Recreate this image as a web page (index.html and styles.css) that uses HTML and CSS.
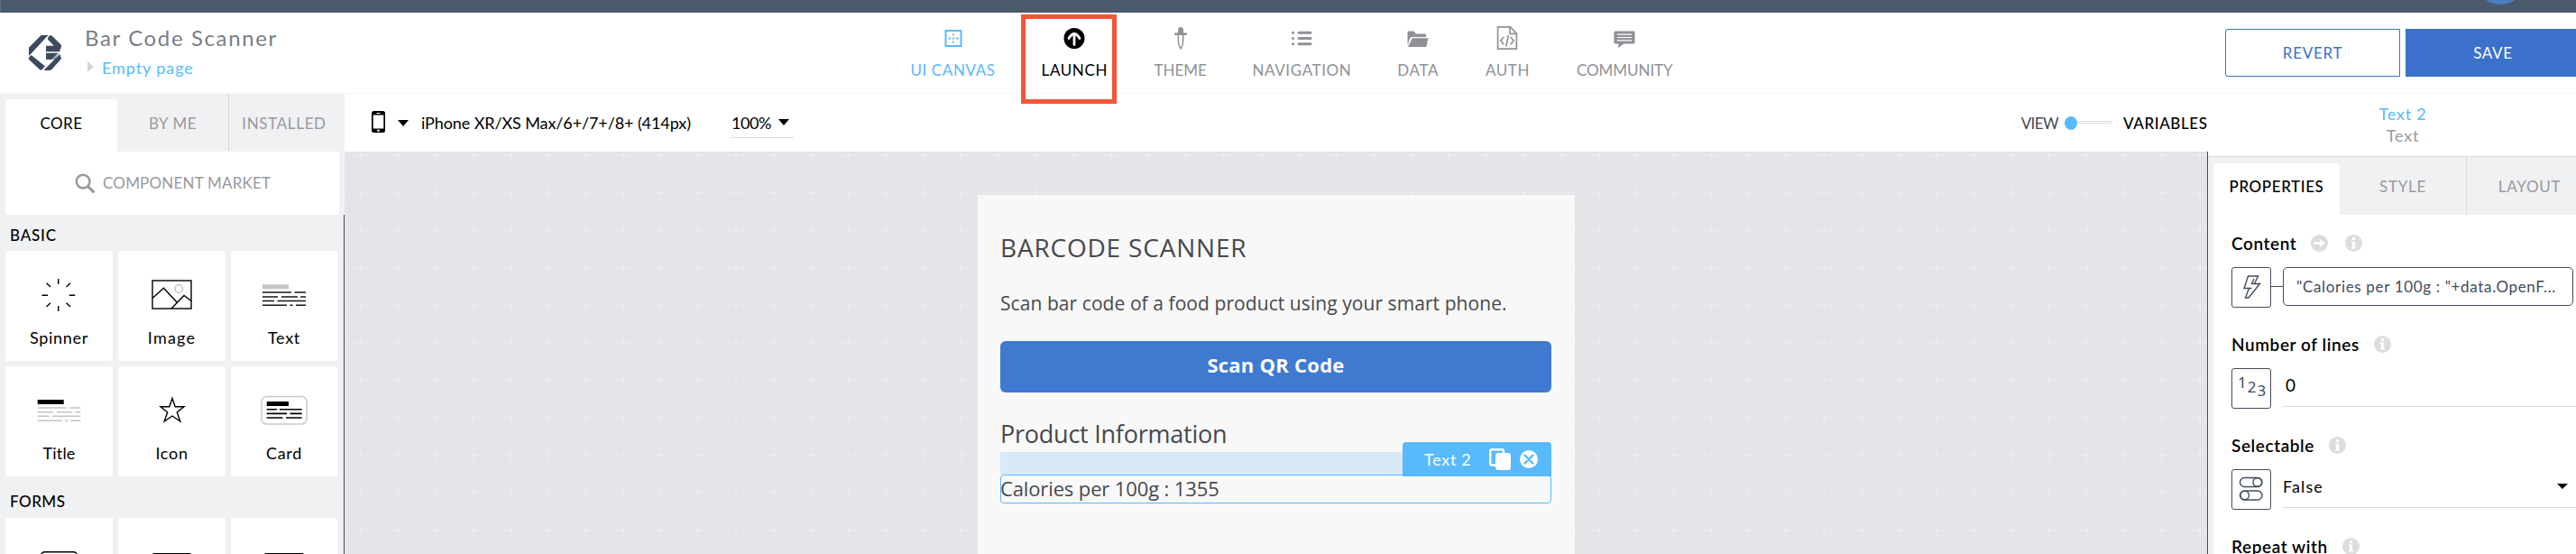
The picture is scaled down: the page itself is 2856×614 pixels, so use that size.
FILE: index.html
```html
<!DOCTYPE html>
<html lang="en">
<head>
<meta charset="utf-8">
<title>Bar Code Scanner</title>
<link rel="stylesheet" href="styles.css">
</head>
<body>
<div class="app">
  <div class="strip"><svg class="strip-svg" viewBox="0 0 60 14"><circle cx="30" cy="-23" r="28" fill="#4a7fc1"/></svg></div>

  <header class="header">
    <div class="brand">
      <svg class="logo" viewBox="0 0 108 117" fill="#3b4a5e">
        <path d="M0 41 41 0H66L58 7 4 65 0 69Z"/>
        <path d="M66 4 72 0C77 2 80 5 84 9L108 33V38L103 50V55H57V35H83L62 13Z"/>
        <path d="M57 59H101L84 81H57Z"/>
        <path d="M0 74 8 66 55 104 44 115C41 117 38 116 36 114L0 81Z"/>
        <path d="M49 117 103 63 108 78 76 114C74 116 72 117 69 117Z"/>
        <path d="M101 57 46 113M0 71 10 61M57 11 68 0" stroke="#fff" stroke-width="3"/>
      </svg>
      <div class="brand-text">
        <div class="app-name">Bar Code Scanner</div>
        <div class="page-row"><i class="arrow-right"></i><span class="page-name">Empty page</span></div>
      </div>
    </div>
    <nav class="nav">
      <div class="nav-item w93 active">
        <svg viewBox="0 0 28 28"><rect x="5.500" y="5" width="17" height="17" fill="none" stroke="#58bafa" stroke-width="2"/><g fill="#58bafa"><rect x="13" y="8.300" width="2" height="2"/><rect x="13" y="12.500" width="2" height="2"/><rect x="13" y="16.700" width="2" height="2"/><rect x="8.600" y="12.500" width="2.400" height="2"/><rect x="17.200" y="12.500" width="2.400" height="2"/></g></svg>
        <span>UI CANVAS</span>
      </div>
      <div class="nav-item w71 current">
        <svg viewBox="0 0 28 28"><circle cx="14" cy="13.500" r="11.500" fill="#000"/><path d="M14 20.500V9M8 13.500Q11 8.500 14 8.500Q17 8.500 20 13.500" fill="none" stroke="#fff" stroke-width="2.800" stroke-linecap="round" stroke-linejoin="round"/></svg>
        <span>LAUNCH</span>
        <div class="highlight"></div>
      </div>
      <div class="nav-item w58 tight">
        <svg viewBox="0 0 28 28"><path d="M11 8V4.500Q11 1 14 1Q17 1 17 4.500V8Z" fill="#8f9197"/><path d="M7.200 7.400H20.800V10H7.200Z" fill="#8f9197"/><path d="M11.400 10V17Q11.400 21 14 25Q16.700 21 16.700 17V10" fill="none" stroke="#8f9197" stroke-width="1.500"/></svg>
        <span>THEME</span>
      </div>
      <div class="nav-item w106">
        <svg viewBox="0 0 28 28" stroke="#8f9197" stroke-width="3" stroke-linecap="round"><path d="M4.500 7.200h.1M4.500 13.500h.1M4.500 19.800h.1M11 7.200H24M11 13.500H24M11 19.800H24"/></svg>
        <span>NAVIGATION</span>
      </div>
      <div class="nav-item w46">
        <svg viewBox="0 0 28 28" fill="#8f9197"><path d="M2.500 6.500Q2.500 5.500 3.500 5.500H9.500L12 8.500H22Q23 8.500 23 9.500V12H7.500Q6 12 5 14L3.500 18V20H2.500Z"/><path d="M7.800 13.300H25.500L23.500 22Q23.300 23 22.300 23H3Z"/></svg>
        <span>DATA</span>
      </div>
      <div class="nav-item w47">
        <svg viewBox="0 0 28 28" fill="none" stroke="#8f9197" stroke-width="1.700"><path d="M3.600 .9H17.500L24.400 8V25.200H3.600Z"/><path d="M17 1V8.300H24.400"/><path d="M10.300 12 6.800 16 10.300 20.200M17.700 12 21.200 16 17.700 20.200M15.300 10 12.900 22.300"/></svg>
        <span>AUTH</span>
      </div>
      <div class="nav-item w107 tight">
        <svg viewBox="0 0 28 28"><path d="M4 5.500H24Q25.500 5.500 25.500 7V18Q25.500 19.500 24 19.500H13.500L7 24 7.500 19.500H4Q2.500 19.500 2.500 18V7Q2.500 5.500 4 5.500Z" fill="#8f9197"/><path d="M5.800 9.200H22.200M5.800 12.500H22.200M5.800 15.800H22.200" stroke="#fff" stroke-width="1.200"/></svg>
        <span>COMMUNITY</span>
      </div>
    </nav>
    <div class="actions">
      <div class="btn revert">REVERT</div>
      <div class="btn save">SAVE</div>
    </div>
  </header>

  <div class="workspace">
    <aside class="left">
      <div class="left-tabs">
        <div class="ltab on">CORE</div>
        <div class="ltab">BY ME</div>
        <div class="ltab sep">INSTALLED</div>
      </div>
      <div class="market">
        <svg viewBox="0 0 24 24" fill="none" stroke="#97999e"><circle cx="9.500" cy="9.500" r="7.700" stroke-width="2.600"/><path d="M15 15 22.300 22.300" stroke-width="3.200"/></svg>
        <span>COMPONENT MARKET</span>
      </div>
      <div class="palette">
        <div class="section basic">BASIC</div>
        <div class="cards">
          <div class="card"><svg viewBox="0 0 119 80" stroke="#000" stroke-width="1.400"><path d="M58.700 31v6M58.700 61v6M40.500 49.300h6.500M70.700 49.300h6.500M45.500 35.700l4.500 4.300M72 35.700l-4.500 4.300M45.500 62l4.500-4.300M72 62l-4.500-4.300"/></svg><span class="ls1">Spinner</span></div>
          <div class="card"><svg viewBox="0 0 119 80" fill="none" stroke="#000" stroke-width="1.400"><rect x="38" y="33" width="43" height="31"/><path d="M38 52.500 50.500 41.200 65 57M59 64 73 49.500 81 55.500"/><circle cx="67.300" cy="42" r="4.200" stroke="#c3c4c7"/></svg><span class="ls2">Image</span></div>
          <div class="card"><svg viewBox="0 0 119 80"><path d="M35 37.300H64V42.200H35Z" fill="#c3c4c7"/><path d="M35 46H67M70.500 46H83M35 51H52M56 51H74M77 51H83M35 55.500H48M51.500 55.500H83M35 60.300H62M65.500 60.300H68.500M72 60.300H83" stroke="#1a1618" stroke-width="1.600"/></svg><span class="ls1">Text</span></div>
          <div class="card"><svg viewBox="0 0 119 80"><path d="M35.700 37H64.700V42H35.700Z"/><path d="M35.700 46H67.500M71 46H83.300M35.700 50.700H53M57 50.700H74M77.500 50.700H83.300M35.700 55.300H48.500M52 55.300H83.300M35.700 60.200H63M66 60.200H69M72.500 60.200H83.300" stroke="#c3c4c7" stroke-width="1.600"/></svg><span>Title</span></div>
          <div class="card"><svg viewBox="0 0 119 80"><path d="M60 35.500 63.200 44.700H73L65.300 51 68.800 61 60 55 51.200 61 54.700 51 47 44.700H56.800Z" fill="none" stroke="#000" stroke-width="1.400"/></svg><span class="ls1">Icon</span></div>
          <div class="card"><svg viewBox="0 0 119 80"><rect x="34" y="33.600" width="50" height="30.400" rx="5.500" fill="none" stroke="#c8c9cd" stroke-width="1.500"/><path d="M39.700 39H64V44H39.700Z"/><path d="M39.700 47.700H51M54 47.700H78.700M39.700 52.400H62M65.500 52.400H78.700M39.700 57H57.500M61 57H78.700" stroke="#000" stroke-width="1.600"/></svg><span class="ls1">Card</span></div>
        </div>
        <div class="section forms">FORMS</div>
        <div class="cards">
          <div class="card"><svg viewBox="0 0 119 80"><rect x="39.500" y="37.700" width="40" height="28" rx="4" fill="none" stroke="#000" stroke-width="1.400"/></svg></div>
          <div class="card"><svg viewBox="0 0 119 80"><rect x="38" y="39" width="43" height="14" rx="2"/></svg></div>
          <div class="card"><svg viewBox="0 0 119 80"><rect x="37" y="39" width="44" height="14" rx="2"/></svg></div>
        </div>
      </div>
    </aside>

    <main class="center">
      <div class="toolbar">
        <svg class="phone" viewBox="0 0 15 24"><rect width="15" height="24" rx="2.500"/><path d="M1.700 4.500H13.300V19.500H1.700Z" fill="#fff"/><path d="M5.500 2.500H9.500" stroke="#fff"/><circle cx="7.500" cy="21.700" r="1.200" fill="#fff"/></svg>
        <i class="caret dev"></i>
        <span class="device">iPhone XR/XS Max/6+/7+/8+ (414px)</span>
        <span class="zoom"><span>100%</span><i class="caret"></i></span>
        <span class="view">VIEW</span>
        <span class="toggle"><i class="knob"></i><i class="track"></i></span>
        <span class="variables">VARIABLES</span>
      </div>
      <div class="canvas">
        <svg class="grid">
          <defs><pattern id="g" width="41.600" height="41.600" patternUnits="userSpaceOnUse" x="-2.800" y="-16.800"><path d="M0 20.800H41.600M20.800 0V41.600" stroke="#e9eaed" stroke-width="1.300" stroke-dasharray="4.160 2.773" stroke-dashoffset="2.080"/><path d="M18.300 20.800H23.300M20.800 18.300V23.300" stroke="#ecedef" stroke-width="1.500"/></pattern></defs>
          <rect width="100%" height="100%" fill="url(#g)"/>
        </svg>
        <div class="screen">
          <div class="s-title">BARCODE SCANNER</div>
          <div class="s-copy">Scan bar code of a food product using your smart phone.</div>
          <div class="s-button">Scan QR Code</div>
          <div class="s-sub">Product Information</div>
          <div class="s-spacer"></div>
          <div class="s-selected">Calories per 100g : 1355
            <div class="tag">
              <span>Text 2</span>
              <svg class="copy" viewBox="0 0 24 24"><path d="M16 6V3Q16 1.300 14.500 1.300H3Q1.300 1.300 1.300 3V17Q1.300 18.500 3 18.500H7" fill="none" stroke="#fff" stroke-width="2.400"/><rect x="7" y="5" width="17" height="19" rx="3" fill="#fff"/></svg>
              <svg class="close" viewBox="0 0 20 20"><circle cx="10" cy="10" r="10" fill="#fff"/><path d="M5.500 5.500 14.500 14.500M14.500 5.500 5.500 14.500" stroke="#58bafa" stroke-width="2.400" stroke-linecap="round"/></svg>
            </div>
          </div>
        </div>
      </div>
    </main>

    <aside class="right">
      <div class="r-head"><div class="r-name">Text 2</div><div class="r-type">Text</div></div>
      <div class="r-tabs"><div class="rtab on">PROPERTIES</div><div class="rtab">STYLE</div><div class="rtab sep">LAYOUT</div></div>
      <div class="props">
        <div class="prop">
          <div class="p-label"><span class="content">Content</span>
            <svg class="dot first" viewBox="0 0 19 19"><circle cx="9.500" cy="9.500" r="9.500" fill="#dcdde1"/><path d="M3 7.900H10V5L15.800 9.500 10 14V11.100H3Z" fill="#fff"/></svg>
            <svg class="dot" viewBox="0 0 19 19"><use href="#info"/></svg></div>
          <div class="p-row">
            <div class="p-icon"><svg viewBox="0 0 44 45"><path d="M18.500 10H29.500L25.500 18.500H31.500L19 34H15.500L19.500 23.500H14Z M22.500 23.500H19.500M25.500 18.500H22.500L25 13" fill="none" stroke="#434b5b" stroke-width="1.400"/></svg></div>
            <i class="wire"></i>
            <div class="p-input">"Calories per 100g : "+data.OpenF...</div>
          </div>
        </div>
        <div class="prop">
          <div class="p-label"><span>Number of lines</span><svg class="dot" viewBox="0 0 19 19"><use href="#info"/></svg></div>
          <div class="p-row">
            <div class="p-icon nums"><span class="n1">1</span><span class="n2">2</span><span class="n3">3</span></div>
            <div class="p-field zero">0</div>
          </div>
        </div>
        <div class="prop">
          <div class="p-label"><span>Selectable</span><svg class="dot" viewBox="0 0 19 19"><use href="#info"/></svg></div>
          <div class="p-row">
            <div class="p-icon"><svg viewBox="0 0 44 45" fill="none" stroke="#434b5b" stroke-width="1.400"><rect x="9.500" y="9.500" width="24.500" height="10" rx="5"/><circle cx="28.800" cy="14.500" r="4.800"/><rect x="9.500" y="24" width="24.500" height="10" rx="5"/><circle cx="14.700" cy="29" r="4.800"/></svg></div>
            <div class="p-field"><span class="false">False</span><i class="caret"></i></div>
          </div>
        </div>
        <div class="prop">
          <div class="p-label"><span>Repeat with</span><svg class="dot near" viewBox="0 0 19 19"><g id="info"><circle cx="9.500" cy="9.500" r="9.500" fill="#dcdde1"/><path d="M8 3H11.200V6H8ZM6.800 7.500H11.200V14H12.300V15.500H6.800V14H8V9H6.800Z" fill="#fff"/></g></svg></div>
        </div>
      </div>
    </aside>
  </div>
</div>
</body>
</html>
```
FILE: styles.css
```css
* { box-sizing: border-box; }
body { margin: 0; background: #fff; font-family: Lato, "Liberation Sans", sans-serif; color: #000; }
svg { display: block; flex: none; }
i { display: block; flex: none; }
.app { width: 2856px; height: 614px; overflow: hidden; display: flex; flex-direction: column; white-space: nowrap; }

.strip { height: 14px; flex: none; background: #4a5a6b; padding-left: 2741px; border-left: 1px solid #5d6c7c; }
.strip-svg { width: 60px; height: 14px; }

.header { height: 90px; flex: none; display: flex; border-bottom: 1px solid #f7f7f8; }
.brand { width: 1010px; flex: none; display: flex; padding-left: 32px; }
.logo { width: 36px; height: 39px; margin-top: 25px; }
.brand-text { margin-left: 26px; }
.app-name { margin-top: 13px; font-size: 24px; line-height: 30px; letter-spacing: 1.63px; color: #787d87; }
.page-row { display: flex; align-items: center; height: 24px; margin-top: 6px; padding-left: 3px; }
.arrow-right { border-left: 7px solid #d3d4d8; border-top: 6.5px solid transparent; border-bottom: 6.5px solid transparent; margin-right: 9px; margin-top: -2px; }
.page-name { font-size: 18px; line-height: 24px; letter-spacing: .92px; color: #58bafa; }

.nav { display: flex; gap: 52.8px; padding-top: 15px; font-size: 17px; letter-spacing: .6px; color: #8f9197; }
.nav-item { position: relative; display: flex; flex-direction: column; align-items: center; flex: none; }
.nav-item svg { width: 28px; height: 28px; }
.nav-item span { margin-top: 10px; line-height: 22px; }
.active { color: #58bafa; }
.current { color: #000; }
.tight { letter-spacing: -.05px; }
.w93 { width: 93px; } .w71 { width: 71px; } .w58 { width: 58px; } .w106 { width: 106px; }
.w46 { width: 46px; } .w47 { width: 47px; } .w107 { width: 107px; }
.highlight { position: absolute; left: -24px; top: -13px; width: 106px; height: 99px; border: 5px solid #f65437; z-index: 5; }

.actions { display: flex; gap: 6px; margin-left: auto; padding-top: 18px; margin-right: -5px; }
.btn { width: 194px; height: 53px; line-height: 52px; text-align: center; font-size: 17px; letter-spacing: .7px; border: 1px solid #3b71cb; border-radius: 3px 0 0 3px; }
.btn.revert { color: #3b71cb; }
.btn.save { background: #3b71cb; color: #fff; border-radius: 0; }

.workspace { flex: 1; display: flex; min-height: 0; }
.left { width: 382px; flex: none; background: #f0f1f3; display: flex; flex-direction: column; }
.left-tabs { height: 64px; flex: none; display: flex; padding-left: 6px; font-size: 17px; color: #97999e; }
.ltab { width: 123px; line-height: 66px; text-align: center; letter-spacing: .5px; }
.ltab.on { width: 124px; height: 58px; margin-top: 6px; line-height: 54px; background: #fff; color: #000; border-radius: 4px 4px 0 0; }
.ltab.sep { width: 123px; border-left: 1px solid #d9dadd; letter-spacing: .65px; }
.market { width: 370px; height: 70px; flex: none; margin-left: 6px; background: #fff; display: flex; align-items: center; padding-left: 77px; font-size: 17px; letter-spacing: .2px; color: #97999e; }
.market svg { width: 23px; height: 23px; }
.market span { margin-left: 8px; line-height: 24px; }
.palette { flex: 1; min-height: 0; border-right: 1px solid #434857; overflow: hidden; }
.section { padding-left: 11px; font-size: 17px; font-weight: 500; line-height: 24px; }
.basic { margin-top: 11px; margin-bottom: 5px; letter-spacing: .8px; }
.forms { margin-top: 16px; margin-bottom: 6px; letter-spacing: .5px; }
.cards { display: grid; grid-template-columns: 119px 119px 118px; grid-auto-rows: 122px; gap: 6px; padding-left: 6px; }
.card { background: #fff; border-radius: 3px; display: flex; flex-direction: column; align-items: center; font-size: 18px; overflow: hidden; }
.card svg { width: 119px; height: 80px; }
.card span { margin-top: 4px; line-height: 24px; letter-spacing: .2px; }
.card .ls1 { letter-spacing: .7px; }
.card .ls2 { letter-spacing: 1.2px; }

.center { width: 2066px; flex: none; display: flex; flex-direction: column; }
.toolbar { height: 64px; flex: none; display: flex; align-items: center; padding-left: 30px; }
.phone { width: 15px; height: 24px; margin-top: -2px; }
.caret { border-top: 7px solid #000; border-left: 6.5px solid transparent; border-right: 6.5px solid transparent; }
.dev { margin-left: 14px; }
.device { width: 345px; margin-left: 12px; padding-left: 2px; font-size: 18px; letter-spacing: -.1px; line-height: 24px; }
.zoom { display: flex; align-items: center; gap: 8px; width: 70px; height: 34px; border-bottom: 1px solid #dcdde0; font-size: 18px; letter-spacing: -.4px; }
.zoom span { padding-left: 1px; }
.view { margin-left: auto; font-size: 17px; letter-spacing: -.6px; color: #434857; }
.toggle { display: flex; align-items: center; width: 52px; margin-left: 7px; }
.knob { width: 14px; height: 15px; border-radius: 50%; background: #58bafa; }
.track { width: 38px; height: 3px; border: 1px solid #dcdde0; border-left: 0; margin-top: -2px; }
.variables { width: 94px; margin-left: 13px; font-size: 17px; font-weight: 500; letter-spacing: .6px; }

.canvas { flex: 1; min-height: 0; position: relative; background: #e4e5e9; border-right: 1px solid #434857; overflow: hidden; padding: 48px 0 0 702px; }
.grid { position: absolute; inset: 0; width: 100%; height: 100%; }
.screen { position: relative; width: 662px; height: 420px; background: #f8f8f8; padding: 46px 26px 0 25px; font-family: "Open Sans", "Noto Sans", sans-serif; color: #47494d; }
.s-title { font-size: 28px; line-height: 24px; letter-spacing: .8px; }
.s-copy { margin-top: 35px; font-size: 21px; line-height: 30px; letter-spacing: .07px; }
.s-button { height: 57px; margin-top: 27px; border-radius: 6px; background: #3f7ad0; color: #fff; font-size: 22px; font-weight: 700; line-height: 53px; letter-spacing: .25px; text-align: center; }
.s-sub { margin-top: 28px; height: 38px; font-size: 27px; line-height: 36px; letter-spacing: -.24px; }
.s-spacer { height: 25px; background: #d8eaf8; }
.s-selected { position: relative; height: 32px; border: 1px solid #58bafa; border-radius: 4px; font-size: 22px; line-height: 28px; letter-spacing: -.13px; text-indent: -1px; }
.tag { position: absolute; right: -1px; top: -37px; width: 165px; height: 38px; background: #58bafa; border-radius: 4px 4px 0 0; color: #fff; display: flex; align-items: center; padding-left: 24px; font: 18px/38px Lato, sans-serif; letter-spacing: .7px; text-indent: 0; }
.tag span { width: 52px; }
.copy { width: 24px; height: 24px; margin-left: 20px; }
.close { width: 20px; height: 20px; margin-left: 10px; }

.right { width: 408px; flex: none; background: #f0f1f3; display: flex; flex-direction: column; }
.r-head { height: 70px; flex: none; background: #fff; border-bottom: 1px solid #d9dadd; padding: 10px 0 0 11px; text-align: center; font-size: 18px; line-height: 24px; letter-spacing: .8px; }
.r-name { width: 410px; color: #58bafa; }
.r-type { width: 410px; color: #97999e; }
.r-tabs { height: 64px; flex: none; display: flex; padding-left: 6px; font-size: 17px; color: #97999e; letter-spacing: .7px; }
.rtab { width: 140px; flex: none; text-align: center; line-height: 66px; }
.rtab.on { height: 57px; margin-top: 7px; line-height: 52px; background: #fff; color: #000; font-weight: 500; letter-spacing: .6px; border-radius: 4px 4px 0 0; }
.rtab.sep { border-left: 1px solid #d9dadd; }
.props { flex: 1; min-height: 0; margin-left: 6px; background: #fff; padding: 19px 0 0 20px; }
.prop { height: 112px; }
.p-label { display: flex; align-items: center; height: 25px; font-size: 19px; line-height: 22px; font-weight: 600; letter-spacing: .58px; }
.dot { width: 19px; height: 19px; margin-left: 16px; }
.dot.first { margin-right: 3px; }
.content { width: 72px; }
.p-row { display: flex; margin-top: 14px; }
.p-icon { width: 44px; height: 45px; flex: none; border: 1px solid #434b5b; border-radius: 3px; color: #434b5b; }
.p-icon svg { width: 44px; height: 45px; margin: -1px; }
.wire { width: 13px; height: 1px; background: #434b5b; margin-top: 21px; }
.p-input { width: 322px; height: 43px; border: 1px solid #434b5b; border-radius: 5px; padding-left: 14px; font-size: 17px; line-height: 41px; letter-spacing: .66px; color: #434b5b; }
.nums { display: flex; padding-left: 6px; gap: 1px; font: 17px/20px "Noto Sans", sans-serif; }
.n1 { margin-top: 5px; } .n2 { margin-top: 10px; } .n3 { margin-top: 14px; }
.p-field { width: 325px; height: 43px; margin-left: 13px; padding-bottom: 4px; border-bottom: 1px solid #dcdde0; font-size: 18px; line-height: 38px; display: flex; align-items: center; justify-content: space-between; padding-right: 9px; }
.zero { padding-left: 3px; font-size: 19px; }
.false { letter-spacing: 1.1px; }
.p-field .caret { border-top-width: 6px; margin-top: -1px; }
```
